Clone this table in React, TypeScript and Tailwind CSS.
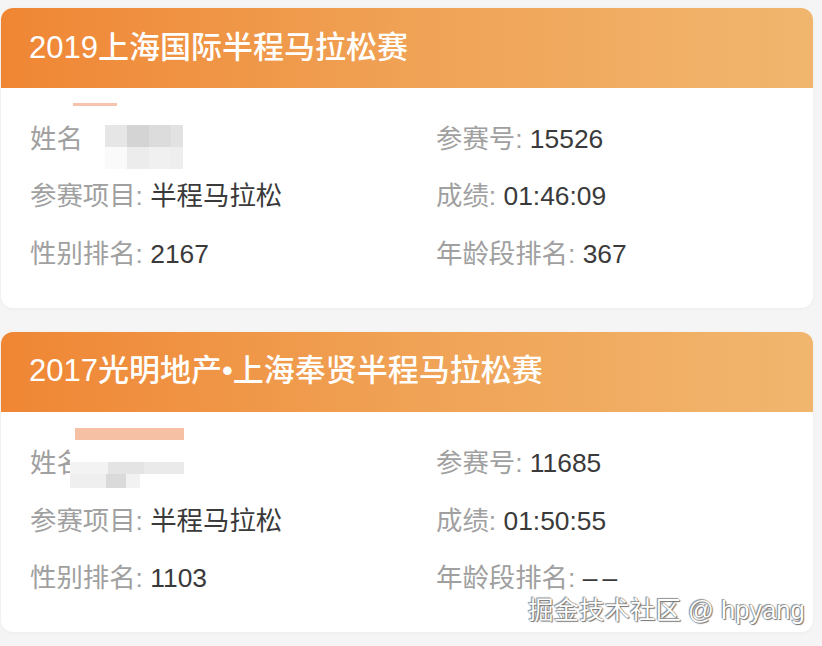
import React from "react";

type Row = [string, string, string, string];

const font = { fontFamily: '"Liberation Sans", "Noto Sans CJK SC", sans-serif' };

function Mosaic1() {
  return (
    <div className="absolute left-[43px] top-[-23px] flex flex-col pointer-events-none">
      <div className="w-[44px] h-[3px] bg-[#f6c3ad]" />
      <div className="mt-[15px] ml-[16px] w-[94px] h-[48px] bg-white pl-[16px] pt-[4px] grid grid-cols-[22px_22px_22px_12px] grid-rows-[22px_22px]">
        <div className="bg-[#e6e6e6]" />
        <div className="bg-[#d4d4d4]" />
        <div className="bg-[#dcdcdc]" />
        <div className="bg-[#e2e2e2]" />
        <div className="bg-[#fafafa]" />
        <div className="bg-[#ececec]" />
        <div className="bg-[#f0f0f0]" />
        <div className="bg-[#eeeeee]" />
      </div>
    </div>
  );
}

function Mosaic2() {
  return (
    <div className="absolute left-[40px] top-[-22px] flex flex-col pointer-events-none">
      <div className="ml-[5px] w-[109px] h-[12px] bg-[#f6c0a4]" />
      <div className="mt-[2px] w-[114px] h-[50px] bg-white pt-[20px] flex flex-col">
        <div className="flex h-[12px]">
          <div className="w-[38px] bg-[#f3f3f3]" />
          <div className="w-[36px] bg-[#e4e4e4]" />
          <div className="w-[40px] bg-[#eaeaea]" />
        </div>
        <div className="flex h-[14px]">
          <div className="w-[36px] bg-[#efefef]" />
          <div className="w-[20px] bg-[#dadada]" />
          <div className="w-[14px] bg-[#f2f2f2]" />
        </div>
      </div>
    </div>
  );
}

function Card({ title, rows, mosaic, pt }: { title: string; rows: Row[]; mosaic: React.ReactNode; pt: string }) {
  return (
    <div className="w-[812px] ml-[1px] rounded-[12px] bg-white overflow-hidden shadow-[0_1px_4px_rgba(0,0,0,0.04)]">
      <div className="h-[80px] flex items-center pl-[28px] bg-[linear-gradient(90deg,#ef8634_0%,#f0a255_50%,#f1b66e_100%)]">
        <span className="text-white text-[31px] font-medium">{title}</span>
      </div>
      <div className={`${pt} pb-[25px] pl-[29px]`}>
        {rows.map((r, i) => (
          <div key={i} className="grid grid-cols-[406px_1fr] h-[57.5px] items-center text-[26.4px] leading-none">
            <div className="relative">
              <span className="text-[#a0a0a0]">{r[0]}</span>
              <span className="text-[#3a3a3a]">{r[1]}</span>
              {i === 0 ? mosaic : null}
            </div>
            <div>
              <span className="text-[#a0a0a0]">{r[2]}</span>
              <span className="text-[#3a3a3a]">{r[3]}</span>
            </div>
          </div>
        ))}
      </div>
    </div>
  );
}

export default function App() {
  return (
    <div className="relative w-[822px] h-[646px] bg-[#f5f5f5] pt-[8px] overflow-hidden" style={font}>
      <div className="flex flex-col gap-[24px]">
        <Card
          title="2019上海国际半程马拉松赛"
          pt="pt-[22px]"
          mosaic={<Mosaic1 />}
          rows={[
            ["姓名", "", "参赛号: ", "15526"],
            ["参赛项目: ", "半程马拉松", "成绩: ", "01:46:09"],
            ["性别排名: ", "2167", "年龄段排名: ", "367"],
          ]}
        />
        <Card
          title="2017光明地产•上海奉贤半程马拉松赛"
          pt="pt-[23px]"
          mosaic={<Mosaic2 />}
          rows={[
            ["姓名", "", "参赛号: ", "11685"],
            ["参赛项目: ", "半程马拉松", "成绩: ", "01:50:55"],
            ["性别排名: ", "1103", "年龄段排名: ", "–\u2009–"],
          ]}
        />
      </div>
      <div className="absolute left-[528px] top-[593px] text-[25.5px] leading-[34px] text-white [text-shadow:0_0_1px_#555,1px_1px_1px_#777,-1px_-1px_1px_#999]">
        掘金技术社区 @ hpyang
      </div>
    </div>
  );
}
